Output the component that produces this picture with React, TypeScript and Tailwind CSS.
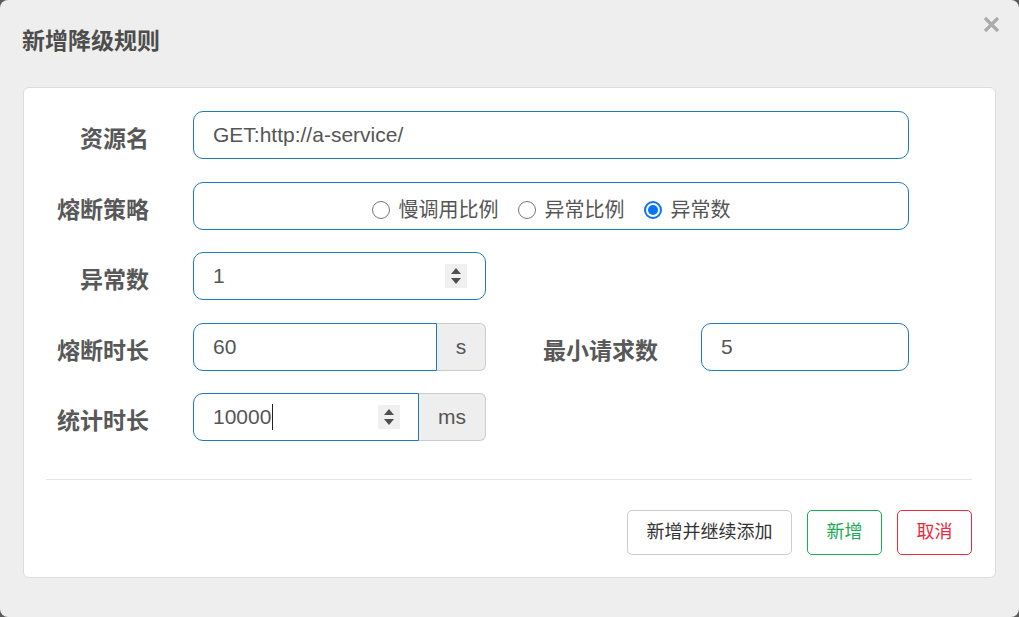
import React from 'react';

const cjk = "font-['Liberation_Sans','Noto_Sans_CJK_SC',sans-serif]";

function Label({ text, width }: { text: string; width: string }) {
    return (
        <div className={`${width} text-right text-[23px] font-bold leading-none text-[#585858] pt-[9px] shrink-0`}>
            {text}
        </div>
    );
}

function Spinner() {
    return (
        <div className="flex flex-col items-center justify-center gap-[4px] w-[22px] h-[24px] bg-[#f0f0f0]">
            <svg width="10" height="6" viewBox="0 0 10 6"><path d="M5 0 L10 6 L0 6 Z" fill="#505050" /></svg>
            <svg width="10" height="6" viewBox="0 0 10 6"><path d="M0 0 L10 0 L5 6 Z" fill="#505050" /></svg>
        </div>
    );
}

function Radio({ label, checked }: { label: string; checked?: boolean }) {
    return (
        <label className="flex items-center gap-[9px]">
            {checked ? (
                <span className="w-[18px] h-[18px] rounded-full border-[2px] border-[#0a74f5] flex items-center justify-center bg-white">
                    <span className="w-[10px] h-[10px] rounded-full bg-[#0a74f5]" />
                </span>
            ) : (
                <span className="w-[18px] h-[18px] rounded-full border border-[#767676] bg-white" />
            )}
            <span className="text-[20px] text-[#555] leading-none">{label}</span>
        </label>
    );
}

export default function App() {
    return (
        <div className={`w-[1019px] h-[617px] bg-[#5a5a5a] ${cjk}`}>
            <div className="relative w-full h-full rounded-[8px] bg-[#eeeeee] flex flex-col">
                {/* Header */}
                <div className="pt-[27px] px-[22px]">
                    <h2 className="text-[23px] leading-[28px] font-bold text-[#4d4d4d]">新增降级规则</h2>
                </div>
                <button className="absolute top-[16px] right-[19px] p-0">
                    <svg width="17" height="17" viewBox="0 0 17 17">
                        <path d="M2 2 L15 15 M15 2 L2 15" stroke="#ababab" strokeWidth="3.2" strokeLinecap="butt" />
                    </svg>
                </button>

                {/* Body card */}
                <div className="mx-[23px] mt-[32px] bg-white border border-[#dcdcdc] rounded-[6px] pt-[23px] pb-[22px]">
                    {/* 资源名 */}
                    <div className="flex items-center h-[48px]">
                        <Label text="资源名" width="w-[125px]" />
                        <div className="ml-[44px] w-[716px] h-[48px] border border-[#1e7ab8] rounded-[10px] flex items-center pl-[19px] text-[21px] text-[#555]">
                            GET:http://a-service/
                        </div>
                    </div>

                    {/* 熔断策略 */}
                    <div className="flex items-center h-[48px] mt-[23px]">
                        <Label text="熔断策略" width="w-[125px]" />
                        <div className="ml-[44px] w-[716px] h-[48px] border border-[#1e7ab8] rounded-[10px] flex items-center justify-center gap-[19px] pt-[8px]">
                            <Radio label="慢调用比例" />
                            <Radio label="异常比例" />
                            <Radio label="异常数" checked />
                        </div>
                    </div>

                    {/* 异常数 */}
                    <div className="flex items-center h-[48px] mt-[22px]">
                        <Label text="异常数" width="w-[125px]" />
                        <div className="ml-[44px] w-[293px] h-[48px] border border-[#1e7ab8] rounded-[10px] flex items-center justify-between pl-[19px] pr-[18px] text-[21px] text-[#555]">
                            <span>1</span>
                            <Spinner />
                        </div>
                    </div>

                    {/* 熔断时长 / 最小请求数 */}
                    <div className="flex items-center h-[48px] mt-[23px]">
                        <Label text="熔断时长" width="w-[125px]" />
                        <div className="ml-[44px] w-[293px] h-[48px] flex">
                            <div className="w-[244px] h-full border border-[#1e7ab8] rounded-l-[10px] flex items-center pl-[19px] text-[21px] text-[#555]">
                                60
                            </div>
                            <div className="flex-1 h-full border border-l-0 border-[#cccccc] bg-[#eeeeee] rounded-r-[6px] flex items-center justify-center text-[21px] text-[#555]">
                                s
                            </div>
                        </div>
                        <Label text="最小请求数" width="w-[172px]" />
                        <div className="ml-[43px] w-[208px] h-[48px] border border-[#1e7ab8] rounded-[10px] flex items-center pl-[19px] text-[21px] text-[#555]">
                            5
                        </div>
                    </div>

                    {/* 统计时长 */}
                    <div className="flex items-center h-[48px] mt-[22px]">
                        <Label text="统计时长" width="w-[125px]" />
                        <div className="ml-[44px] w-[293px] h-[48px] flex">
                            <div className="w-[226px] h-full border border-[#1e7ab8] rounded-l-[10px] flex items-center justify-between pl-[19px] pr-[18px] text-[21px] text-[#555]">
                                <span className="flex items-center">
                                    10000
                                    <span className="inline-block w-[1px] h-[26px] bg-[#222] ml-[1px]" />
                                </span>
                                <Spinner />
                            </div>
                            <div className="flex-1 h-full border border-l-0 border-[#cccccc] bg-[#eeeeee] rounded-r-[6px] flex items-center justify-center text-[21px] text-[#555]">
                                ms
                            </div>
                        </div>
                    </div>

                    {/* Divider */}
                    <div className="mt-[38px] ml-[22px] mr-[23px] h-px bg-[#e5e5e5]" />

                    {/* Footer buttons */}
                    <div className="mt-[30px] pr-[23px] flex justify-end gap-[15px]">
                        <button className="w-[165px] h-[45px] border border-[#cccccc] rounded-[5px] bg-white text-[18px] text-[#333]">
                            新增并继续添加
                        </button>
                        <button className="w-[75px] h-[45px] border border-[#1aad55] rounded-[5px] bg-white text-[18px] text-[#1aad55]">
                            新增
                        </button>
                        <button className="w-[75px] h-[45px] border border-[#ea2a40] rounded-[5px] bg-white text-[18px] text-[#ea2a40]">
                            取消
                        </button>
                    </div>
                </div>
            </div>
        </div>
    );
}
